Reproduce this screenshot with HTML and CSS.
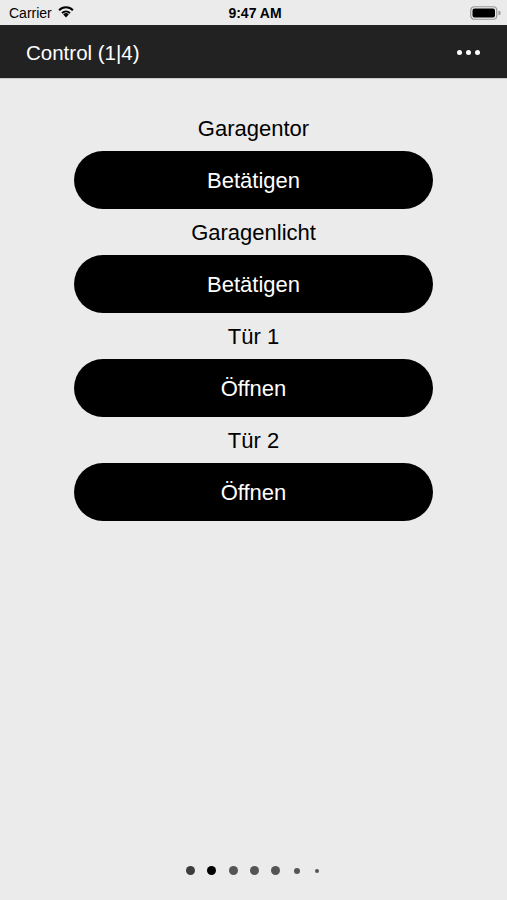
FILE: index.html
```html
<html>
<head>
<title>Control</title>
<link rel="stylesheet" href="styles.css">
</head>
<body>
<div class="screen">
  <div class="statusbar">
    <div class="carrier">Carrier
      <svg class="wifi" width="18" height="13" viewBox="0 0 18 13">
        <path d="M9 12.5 L6.2 9.4 A4 4 0 0 1 11.8 9.4 Z" fill="#000"/>
        <path d="M4.3 7.4 A6.8 6.8 0 0 1 13.7 7.4 L12.4 8.8 A5 5 0 0 0 5.6 8.8 Z" fill="#000"/>
        <path d="M1.4 4.5 A10.8 10.8 0 0 1 16.6 4.5 L15.2 5.9 A8.8 8.8 0 0 0 2.8 5.9 Z" fill="#000"/>
      </svg>
    </div>
    <div class="clock">9:47 AM</div>
    <div class="battery">
      <svg width="31" height="14" viewBox="0 0 31 14">
        <rect x="0.75" y="0.75" width="26" height="12.5" rx="3.5" fill="none" stroke="#999" stroke-width="1.2"/>
        <rect x="2.5" y="2.5" width="22.5" height="9" rx="2" fill="#000"/>
        <path d="M28.5 4.8 A2.2 2.2 0 0 1 28.5 9.2 Z" fill="#999"/>
      </svg>
    </div>
  </div>

  <div class="navbar">
    <div class="title">Control (1|4)</div>
    <div class="more"><span></span><span></span><span></span></div>
  </div>

  <div class="content">
    <div class="label">Garagentor</div>
    <div class="btn">Betätigen</div>
    <div class="label">Garagenlicht</div>
    <div class="btn">Betätigen</div>
    <div class="label">Tür 1</div>
    <div class="btn">Öffnen</div>
    <div class="label">Tür 2</div>
    <div class="btn">Öffnen</div>
  </div>

  <div class="pager">
    <span class="dot first"></span>
    <span class="dot current"></span>
    <span class="dot"></span>
    <span class="dot"></span>
    <span class="dot"></span>
    <span class="dot small"></span>
    <span class="dot tiny"></span>
  </div>
</div>
</body>
</html>
```

FILE: styles.css
```css
body {
  margin: 0;
  background: #ebebeb;
  font-family: "Liberation Sans", Arial, sans-serif;
}
.screen {
  height: 900px;
  display: flex;
  flex-direction: column;
}

/* status bar */
.statusbar {
  height: 25px;
  display: flex;
  align-items: center;
  justify-content: space-between;
  padding: 0 6px 0 9px;
  font-size: 14px;
  color: #000;
}
.carrier { display: flex; align-items: center; gap: 5px; width: 120px; }
.wifi { margin-top: -2px; }
.clock { font-weight: bold; font-size: 14px; }
.battery { width: 120px; display: flex; justify-content: flex-end; }

/* nav bar */
.navbar {
  height: 53px;
  background: #222222;
  border-bottom: 1px solid #c8c8c8;
  display: flex;
  align-items: center;
  justify-content: space-between;
  padding: 0 27px 0 26px;
}
.title { color: #fff; font-size: 20.5px; padding-top: 2px; }
.more { display: flex; gap: 4px; padding-top: 2px; }
.more span {
  width: 5px;
  height: 5px;
  border-radius: 50%;
  background: #fff;
}

/* buttons */
.content {
  padding-top: 26px;
  display: flex;
  flex-direction: column;
  align-items: center;
}
.label {
  height: 46px;
  line-height: 48px;
  font-size: 22px;
  color: #000;
}
.btn {
  box-sizing: border-box;
  width: 359px;
  height: 58px;
  padding-top: 2px;
  line-height: 56px;
  border-radius: 29px;
  background: #000;
  color: #fff;
  font-size: 22px;
  text-align: center;
}

/* page indicator */
.pager {
  margin-top: auto;
  margin-bottom: 25px;
  display: flex;
  justify-content: center;
  align-items: center;
  gap: 12.4px;
}
.dot {
  width: 9px;
  height: 9px;
  border-radius: 50%;
  background: #555;
}
.dot.first { background: #3d3d3d; }
.dot.current { background: #000; }
.dot.small { width: 6px; height: 6px; margin: 0 1px; }
.dot.tiny { width: 4px; height: 4px; margin: 0 2px; }
```
